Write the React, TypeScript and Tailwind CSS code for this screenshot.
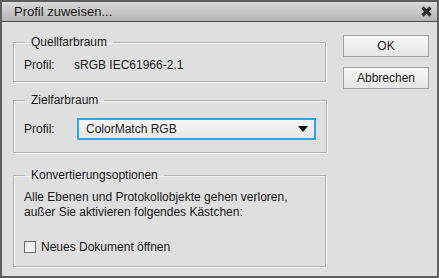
import { useState } from "react";

const font = { fontFamily: '"Liberation Sans", Arial, sans-serif' };

function GroupBox({
  title,
  className,
  children,
}: {
  title: string;
  className?: string;
  children: React.ReactNode;
}) {
  return (
    <fieldset
      className={`border border-[#b3b3b3] shadow-[inset_1px_1px_0_#f4f4f4,1px_1px_0_#f4f4f4] px-[10px] ${className ?? ""}`}
    >
      <legend className="ml-[1px] px-[6px] text-[12px] leading-[16px] text-[#1a1a1a]">
        {title}
      </legend>
      {children}
    </fieldset>
  );
}

function DialogButton({ label }: { label: string }) {
  return (
    <button className="w-[86px] h-[22px] border border-[#a3a3a3] bg-gradient-to-b from-[#f7f7f7] to-[#e6e6e6] text-[12px] leading-none text-[#1a1a1a]">
      {label}
    </button>
  );
}

export default function App() {
  const [newDoc, setNewDoc] = useState(false);

  return (
    <div
      className="w-[439px] h-[278px] border-2 border-[#5e5e5e] bg-[#dfdfdf] flex flex-col overflow-hidden"
      style={font}
    >
      {/* title bar */}
      <div className="h-[20px] flex items-center justify-between pl-[12px] pr-[5px] bg-gradient-to-b from-[#dadada] to-[#b4b4b4] border-b border-[#4a4a4a]">
        <span className="text-[13px] text-[#1a1a1a]">Profil zuweisen...</span>
        <svg width="11" height="11" viewBox="0 0 11 11">
          <path d="M1.5 1.5 L9.5 9.5 M9.5 1.5 L1.5 9.5" stroke="#2e2e2e" strokeWidth="3.2" />
        </svg>
      </div>

      <div className="flex pl-[11px] pr-[8px] pt-[12px] gap-[17px]">
        {/* left column */}
        <div className="w-[313px] flex flex-col">
          <GroupBox title="Quellfarbraum" className="pt-[7px] pb-[8px]">
            <div className="flex text-[12px] leading-[16px] text-[#1a1a1a]">
              <span className="w-[50px]">Profil:</span>
              <span>sRGB IEC61966-2.1</span>
            </div>
          </GroupBox>

          <GroupBox title="Zielfarbraum" className="mt-[10px] pt-[10px] pb-[12px]">
            <div className="flex items-center text-[12px] text-[#1a1a1a]">
              <span className="w-[53px]">Profil:</span>
              <div className="w-[239px] h-[22px] border-2 border-[#2aa8e2] bg-gradient-to-b from-[#f6f6f6] to-[#e8e8e8] flex items-center justify-between pl-[7px] pr-[6px]">
                <span>ColorMatch RGB</span>
                <svg width="10" height="6" viewBox="0 0 10 6">
                  <path d="M0 0 H10 L5 6 Z" fill="#111" />
                </svg>
              </div>
            </div>
          </GroupBox>

          <GroupBox title="Konvertierungsoptionen" className="mt-[14px] pt-[7px] pb-[11px]">
            <p className="text-[12px] leading-[15px] text-[#1a1a1a]">
              Alle Ebenen und Protokollobjekte gehen verloren,
              <br />
              außer Sie aktivieren folgendes Kästchen:
            </p>
            <label className="mt-[19px] flex items-center gap-[5px] text-[12px] leading-[16px] text-[#1a1a1a]">
              <span
                onClick={() => setNewDoc(!newDoc)}
                className="w-[12px] h-[12px] border border-[#6e6e6e] bg-gradient-to-b from-[#ececec] to-[#f8f8f8] flex items-center justify-center text-[10px]"
              >
                {newDoc ? "✓" : ""}
              </span>
              Neues Dokument öffnen
            </label>
          </GroupBox>
        </div>

        {/* buttons */}
        <div className="flex flex-col gap-[10px] pt-[1px]">
          <DialogButton label="OK" />
          <DialogButton label="Abbrechen" />
        </div>
      </div>
    </div>
  );
}
